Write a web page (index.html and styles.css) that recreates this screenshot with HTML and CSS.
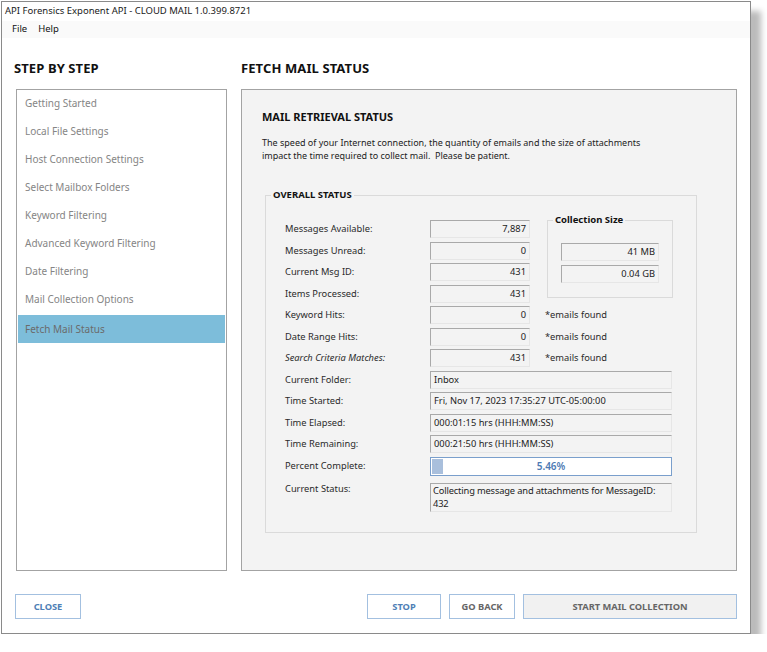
FILE: index.html
```html
<!DOCTYPE html>
<html>
<head>
<meta charset="utf-8">
<link rel="stylesheet" href="styles.css">
</head>
<body>
<div class="window">
  <div class="titlebar">API Forensics Exponent API - CLOUD MAIL 1.0.399.8721</div>
  <div class="menubar"><span>File</span><span>Help</span></div>
  <div class="content">
    <div class="columns">
      <div class="col-left">
        <h2 class="heading">STEP BY STEP</h2>
        <ul class="steps">
          <li>Getting Started</li>
          <li>Local File Settings</li>
          <li>Host Connection Settings</li>
          <li>Select Mailbox Folders</li>
          <li>Keyword Filtering</li>
          <li>Advanced Keyword Filtering</li>
          <li>Date Filtering</li>
          <li>Mail Collection Options</li>
          <li class="active">Fetch Mail Status</li>
        </ul>
      </div>
      <div class="col-right">
        <h2 class="heading">FETCH MAIL STATUS</h2>
        <div class="panel">
          <h3 class="panel-title">MAIL RETRIEVAL STATUS</h3>
          <p class="desc">The speed of your Internet connection, the quantity of emails and the size of attachments<br>impact the time required to collect mail.&nbsp; Please be patient.</p>
          <div class="group">
            <span class="legend">OVERALL STATUS</span>
            <div class="form">
              <div class="lbl">Messages Available:</div>
              <div class="box num">7,887</div>
              <div class="sizegroup">
                <span class="legend small">Collection Size</span>
                <div class="box num sizebox">41 MB</div>
                <div class="box num sizebox">0.04 GB</div>
              </div>

              <div class="lbl">Messages Unread:</div>
              <div class="box num">0</div>

              <div class="lbl">Current Msg ID:</div>
              <div class="box num">431</div>

              <div class="lbl">Items Processed:</div>
              <div class="box num">431</div>

              <div class="lbl">Keyword Hits:</div>
              <div class="box num">0</div>
              <div class="note">*emails found</div>

              <div class="lbl">Date Range Hits:</div>
              <div class="box num">0</div>
              <div class="note">*emails found</div>

              <div class="lbl italic">Search Criteria Matches:</div>
              <div class="box num">431</div>
              <div class="note">*emails found</div>

              <div class="lbl">Current Folder:</div>
              <div class="box wide">Inbox</div>

              <div class="lbl">Time Started:</div>
              <div class="box wide">Fri, Nov 17, 2023 17:35:27 UTC-05:00:00</div>

              <div class="lbl">Time Elapsed:</div>
              <div class="box wide">000:01:15 hrs (HHH:MM:SS)</div>

              <div class="lbl">Time Remaining:</div>
              <div class="box wide">000:21:50 hrs (HHH:MM:SS)</div>

              <div class="lbl">Percent Complete:</div>
              <div class="progress"><div class="fill" style="width: 4.6%"></div><span class="pct">5.46%</span></div>

              <div class="lbl status-lbl">Current Status:</div>
              <div class="box wide status">Collecting message and attachments for MessageID:<br>432</div>
            </div>
          </div>
        </div>
      </div>
    </div>
    <div class="buttons">
      <button class="btn close">CLOSE</button>
      <div class="spacer"></div>
      <button class="btn stop">STOP</button>
      <button class="btn back">GO BACK</button>
      <button class="btn start">START MAIL COLLECTION</button>
    </div>
  </div>
</div>
</body>
</html>
```

FILE: styles.css
```css
* { box-sizing: border-box; }
html, body { margin: 0; padding: 0; background: #ffffff; }
body {
  font-family: "Noto Sans", "DejaVu Sans", sans-serif;
  color: #222;
}
.window {
  margin: 1px 0 0 1px;
  width: 750px;
  height: 633px;
  border: 1px solid #8a8a8a;
  background: #ffffff;
  box-shadow: 10px 10px 6px #bbbbbb;
  display: flex;
  flex-direction: column;
}
.titlebar {
  height: 19px;
  line-height: 17px;
  padding-left: 3px;
  font-size: 9.5px;
  color: #1a1a1a;
}
.menubar {
  height: 17px;
  background: #fafafa;
  display: flex;
  gap: 11px;
  padding-left: 10px;
  font-size: 9.5px;
  line-height: 16px;
  color: #111;
}
.content {
  padding: 0 12px 0 12px;
  flex: 1;
  display: flex;
  flex-direction: column;
}
.columns {
  display: grid;
  grid-template-columns: 213px 496px;
  column-gap: 14px;
  padding-top: 21px;
}
.heading {
  margin: 0;
  height: 30px;
  font-size: 13px;
  font-weight: 700;
  line-height: 18px;
  color: #111;
  letter-spacing: 0.1px;
}
.steps {
  list-style: none;
  margin: 0 0 0 2px;
  padding: 0 1px;
  width: 211px;
  height: 482px;
  border: 1px solid #a3a3a3;
  background: #fff;
}
.steps li {
  height: 28px;
  line-height: 27px;
  padding-left: 7px;
  font-size: 10px;
  color: #858585;
}
.steps li.active {
  margin-top: 1px;
  background: #7dbdda;
  color: #6b6b6b;
  line-height: 28px;
}
.panel {
  height: 482px;
  border: 1px solid #a3a3a3;
  background: #f3f3f3;
  padding: 20px 0 0 20px;
}
.panel-title {
  margin: 0;
  font-size: 11px;
  font-weight: 700;
  line-height: 14px;
  color: #111;
}
.desc {
  margin: 12px 0 0 0;
  font-size: 9px;
  line-height: 13px;
  color: #222;
}
.group {
  position: relative;
  margin: 33px 0 0 3px;
  width: 432px;
  height: 338px;
  border: 1px solid #dadada;
  padding: 24px 0 0 19px;
}
.legend {
  position: absolute;
  top: -8px;
  left: 5px;
  padding: 0 2px;
  background: #f3f3f3;
  font-size: 9.5px;
  font-weight: 700;
  line-height: 14px;
  color: #111;
}
.form {
  display: grid;
  grid-template-columns: 145px 100px 142px;
  grid-auto-rows: 18px;
  row-gap: 3.5px;
}
.lbl {
  grid-column: 1;
  font-size: 9.3px;
  line-height: 17px;
  color: #2a2a2a;
}
.lbl.italic { font-style: italic; }
.box {
  background: #f3f3f3;
  border: 1px solid;
  border-color: #a9a9a9 #e6e6e6 #e6e6e6 #a9a9a9;
  font-size: 9.3px;
  line-height: 16px;
  padding: 0 3px;
  color: #222;
  white-space: nowrap;
  overflow: hidden;
}
.box.num { grid-column: 2; text-align: right; }
.box.wide { grid-column: 2 / span 2; }
.note {
  grid-column: 3;
  padding-left: 15px;
  font-size: 9.3px;
  line-height: 17px;
  color: #2a2a2a;
}
.sizegroup {
  position: relative;
  grid-column: 3;
  grid-row: 1 / span 4;
  align-self: start;
  margin-left: 17px;
  width: 126px;
  height: 78px;
  border: 1px solid #dadada;
  padding: 22px 0 0 13px;
  display: flex;
  flex-direction: column;
  gap: 4px;
}
.legend.small { left: 5px; top: -8px; }
.sizebox { width: 98px; height: 18px; flex: none; }
.progress {
  grid-column: 2 / span 2;
  position: relative;
  height: 19px;
  border: 1px solid #7a9fcc;
  background: #ffffff;
  padding: 1px;
}
.progress .fill {
  height: 100%;
  background: #a9bfdc;
}
.pct {
  position: absolute;
  left: 0; right: 0; top: 0;
  text-align: center;
  font-size: 10px;
  font-weight: 600;
  line-height: 17px;
  color: #4c79b3;
}
.status-lbl { margin-top: 2px; }
.box.status {
  margin-top: 5px;
  height: 29px;
  line-height: 12.5px;
  padding: 1px 2px 0 2px;
  white-space: nowrap;
  letter-spacing: -0.15px;
}
.buttons {
  display: flex;
  gap: 8px;
  margin-top: 23px;
  padding-left: 1px;
  width: 723px;
}
.spacer { flex: 1; }
.btn {
  height: 25px;
  background: #ffffff;
  border: 1px solid #a3c0e0;
  font-family: "Noto Sans", "DejaVu Sans", sans-serif;
  font-size: 9.3px;
  font-weight: 700;
  color: #4f7fb6;
  padding: 0;
  margin: 0;
}
.btn.close { width: 66px; }
.btn.stop { width: 74px; }
.btn.back { width: 66px; color: #666; }
.btn.start { width: 214px; background: #f1f1f1; color: #666; }
```
